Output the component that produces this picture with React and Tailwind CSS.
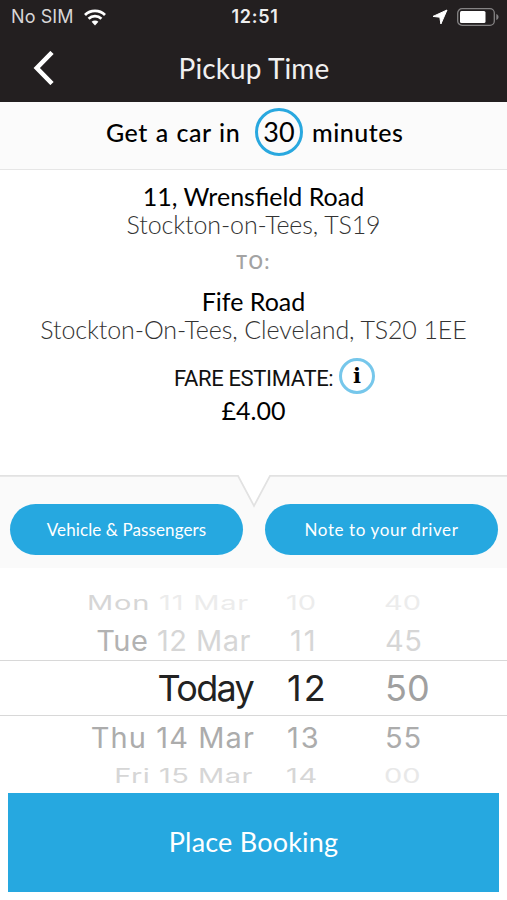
const rows = [
  {
    row: 'h-[38px] text-[29px] text-[#ececec]',
    label: ['Mon', '11 Mar'],
    hour: '10',
    minute: '40',
    day: 'w-[249px] tracking-[0.8px]',
    dayName: 'text-[#d6d6d6]',
    hourClass: 'ml-[37px] w-[98px]',
    text: 'scale-y-[0.68]',
    minuteColor: '',
  },
  {
    row: 'h-[39px] text-[29px] text-[#d6d6d6]',
    label: ['Tue', '12 Mar'],
    hour: '11',
    minute: '45',
    day: 'w-[251px] tracking-[0.5px]',
    dayName: 'text-[#b2b2b2]',
    hourClass: 'ml-[39px] w-[95px] tracking-[2px]',
    text: 'scale-y-[0.97]',
    minuteColor: 'tracking-[0.6px]',
  },
  {
    row: 'h-[56px] border-y border-[#d8d8d8] text-[36px] text-[#222]',
    label: ['Today'],
    hour: '12',
    minute: '50',
    day: 'w-[253px] tracking-[-1.7px]',
    dayName: '',
    hourClass: 'ml-[34px] w-[98px] tracking-[2px]',
    text: '',
    minuteColor: 'text-[#a0a0a0]',
  },
  {
    row: 'h-[42px] text-[29px] text-[#acacac]',
    label: ['Thu', '14 Mar'],
    hour: '13',
    minute: '55',
    day: 'w-[255px] tracking-[1.1px]',
    dayName: '',
    hourClass: 'ml-[32px] w-[98px] tracking-[2px]',
    text: 'scale-y-[0.97]',
    minuteColor: 'tracking-[0.9px]',
  },
  {
    row: 'h-[35px] text-[29px] text-[#d6d6d6]',
    label: ['Fri', '15 Mar'],
    hour: '14',
    minute: '00',
    day: 'w-[253px] tracking-[0.5px]',
    dayName: '',
    hourClass: 'ml-[33px] w-[98px] tracking-[0.6px]',
    text: 'scale-y-[0.68]',
    minuteColor: 'text-[#e8e8e8]',
  },
];

function StatusBar() {
  return (
    <div className="h-[34px] flex items-center justify-between pl-[11px] pr-[8px] font-['Inter'] text-white">
      <div className="flex-1 flex items-center gap-[10px]">
        <span className="text-[18px] leading-none text-[#d8d6d7] tracking-[0.1px]">No SIM</span>
        <svg width="22" height="17" viewBox="0 0 22 17" fill="none" stroke="#fff" strokeWidth="2.8">
          <path d="M1 5.900a14.300 14.300 0 0 1 20 0" />
          <path d="M4.600 9.700a9.200 9.200 0 0 1 12.800 0" />
          <path d="M11 16.400 7.600 12.800a4.900 4.900 0 0 1 6.800 0z" fill="#fff" stroke="none" />
        </svg>
      </div>
      <span className="text-[18px] leading-none font-semibold text-[#eee] tracking-[0.7px]">12:51</span>
      <div className="flex-1 flex items-center justify-end gap-[9px]">
        <svg width="16" height="16" viewBox="0 0 16 16" fill="#fff" stroke="#fff" strokeWidth="1" strokeLinejoin="round">
          <path d="M15 1 8.900 15 7.800 8.200 1 7.400z" />
        </svg>
        <svg width="42" height="18" viewBox="0 0 42 18">
          <rect x=".7" y=".7" width="36.600" height="16.600" rx="4.400" fill="none" stroke="#858384" strokeWidth="1.3" />
          <rect x="3" y="3" width="25.500" height="12" rx="1.500" fill="#fff" />
          <path d="M39.300 6v6c1.400-.5 2.200-1.700 2.200-3s-.8-2.500-2.200-3z" fill="#858384" />
        </svg>
      </div>
    </div>
  );
}

function Header() {
  return (
    <header className="h-[102px] bg-[#231f20]">
      <StatusBar />
      <div className="h-[67px] flex items-center">
        <button className="ml-[33px] w-[22px]">
          <svg width="22" height="34" viewBox="0 0 22 34" fill="none" stroke="#fff" strokeWidth="4.6">
            <path d="M19 1.500 3.800 17 19 32.500" />
          </svg>
        </button>
        <h1 className="flex-1 pr-[54px] text-center text-[28px] text-[#f1f0f0] tracking-[0.1px]">Pickup Time</h1>
      </div>
    </header>
  );
}

function PickerRow({ item }) {
  return (
    <div className={`flex items-center leading-none whitespace-nowrap ${item.row}`}>
      <div className={`text-right ${item.day} ${item.text}`}>
        <span className={item.dayName}>{item.label[0]}</span>
        {item.label[1] && <span> {item.label[1]}</span>}
      </div>
      <div className={`${item.hourClass} ${item.text}`}>{item.hour}</div>
      <div className={`${item.text} ${item.minuteColor}`}>{item.minute}</div>
    </div>
  );
}

export default function App() {
  return (
    <div className="w-[507px] h-[900px] overflow-hidden bg-white font-['Lato',sans-serif] flex flex-col">
      <Header />

      <section className="h-[68px] bg-[#fbfbfb] border-b border-[#e6e6e6] flex items-start pt-[6px] pl-[106px] text-[25px] leading-[48px] font-medium text-black">
        <span className="w-[149px] tracking-[0.5px] [word-spacing:1.1px]">Get a car in</span>
        <span className="w-[48px] h-[48px] rounded-full border-[3px] border-[#29a8df] leading-[42px] text-[27px] font-normal text-center">
          30
        </span>
        <span className="ml-[9px] tracking-[0.5px]">minutes</span>
      </section>

      <section className="h-[305px] pt-[12px] text-center text-[25px] leading-[28px] text-black">
        <p>11, Wrensfield Road</p>
        <p className="font-light text-[#333] tracking-[-0.1px]">Stockton-on-Tees, TS19</p>
        <p className="mt-[10px] font-['Open_Sans'] text-[19px] font-semibold text-[#a3a3a3] tracking-[1.2px]">TO:</p>
        <p className="mt-[11px]">Fife Road</p>
        <p className="font-light text-[#333] tracking-[-0.1px]">Stockton-On-Tees, Cleveland, TS20 1EE</p>
        <div className="mt-[15px] flex items-center pl-[174px]">
          <span className="w-[165px] pt-[5px] text-left font-['Roboto'] text-[22px] tracking-[-0.35px] text-[#111] whitespace-nowrap">
            FARE ESTIMATE:
          </span>
          <button className="w-[36px] h-[36px] rounded-full border-[3px] border-[#76c7eb] font-['DejaVu_Serif'] text-[21px] leading-[28px] font-bold">
            i
          </button>
        </div>
        <p className="mt-[2px]">£4.00</p>
      </section>

      <section className="relative h-[93px] pt-[29px] pl-[10px] pr-[9px] flex justify-between bg-[#fafafa]">
        <svg className="absolute left-0 top-0" width="507" height="34" viewBox="0 0 507 34">
          <path d="M238 0 254 31 270 0z" fill="#fff" />
          <path d="M0 .9h238l16 30 16-30h237" fill="none" stroke="#e2e2e2" strokeWidth="1.8" />
        </svg>
        <button className="relative w-[233px] h-[51px] rounded-full bg-[#26a8e0] text-[17px] tracking-[0.1px] text-white">
          Vehicle &amp; Passengers
        </button>
        <button className="relative w-[233px] h-[51px] rounded-full bg-[#26a8e0] text-[17px] tracking-[0.6px] text-white">
          Note to your driver
        </button>
      </section>

      <section className="h-[225px] pt-[15px] font-['Inter',sans-serif]">
        {rows.map((item) => (
          <PickerRow key={item.hour} item={item} />
        ))}
      </section>

      <button className="mx-[8px] h-[99px] shrink-0 bg-[#26a8e0] text-[27px] tracking-[0.2px] text-white">
        Place Booking
      </button>
    </div>
  );
}
